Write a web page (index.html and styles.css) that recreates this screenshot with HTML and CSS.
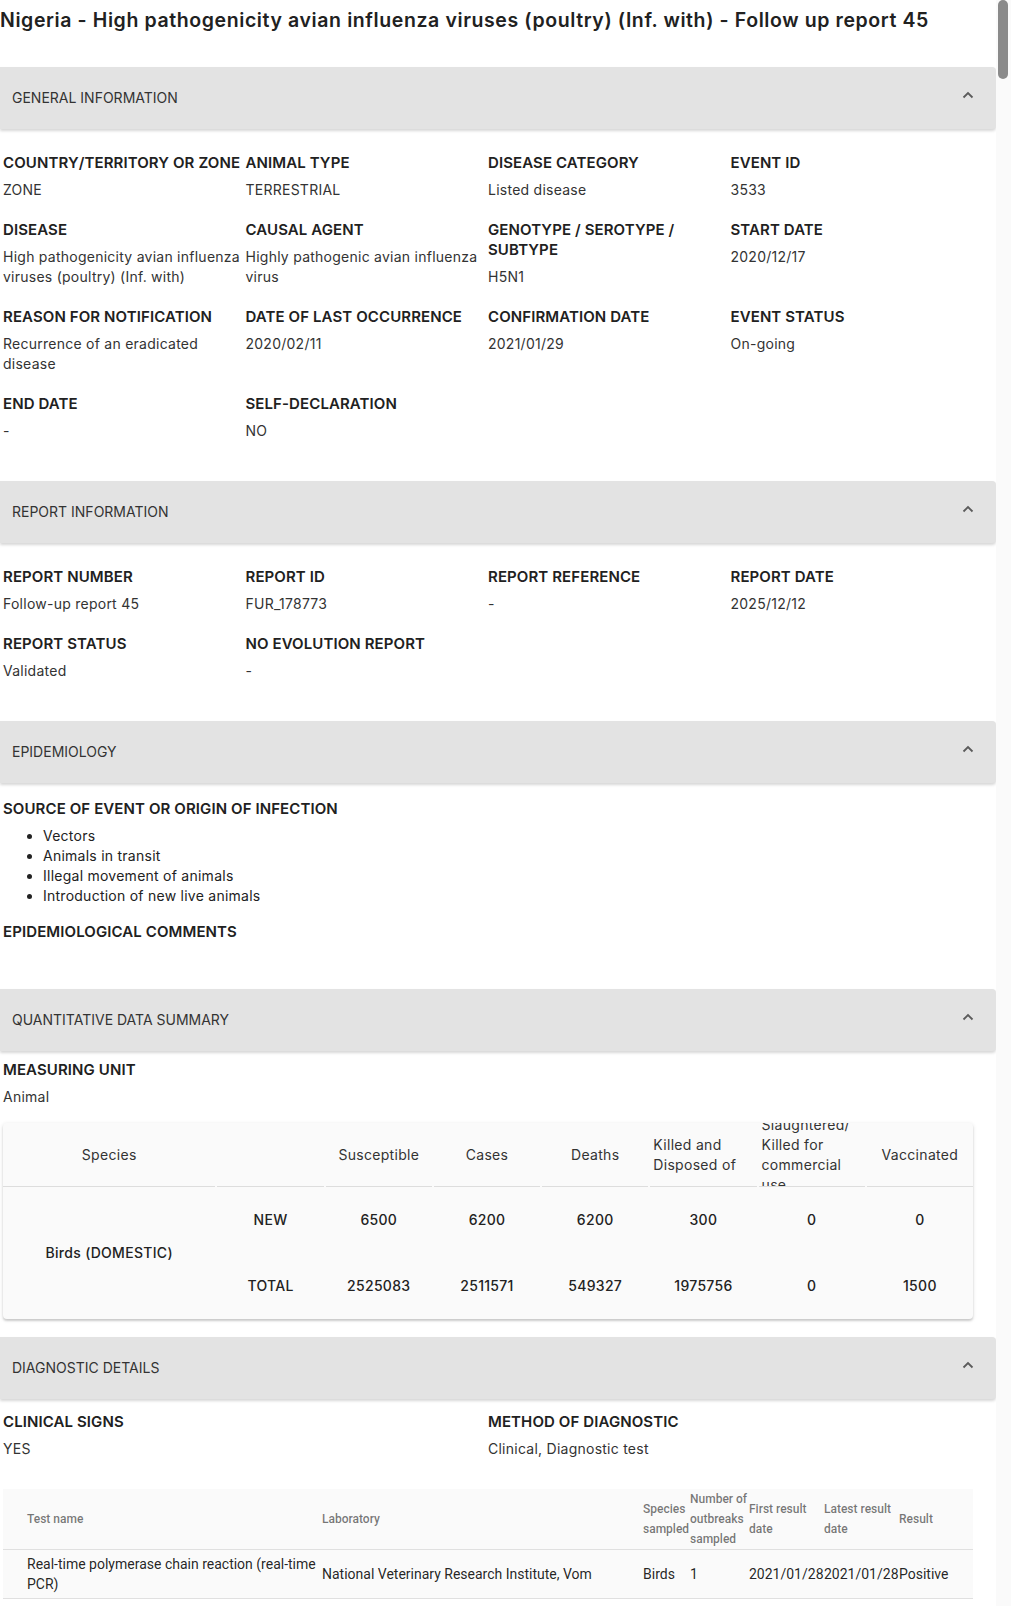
FILE: index.html
```html
<!DOCTYPE html>
<html lang="en">
<head>
  <meta charset="UTF-8">
  <meta name="viewport" content="width=device-width, initial-scale=1.0">
  <title>Follow up report 45 | Event 3533</title>
  <link rel="stylesheet" href="styles.css">
</head>
<body>
  <main class="page">
    <h1 class="report-title">Nigeria - High pathogenicity avian influenza viruses (poultry) (Inf. with) - Follow up report 45</h1>

    <!-- General information -->
    <section class="panel">
      <div class="panel-header">
        <span>General information</span>
        <svg class="chevron" width="12" height="8" viewBox="0 0 12 8"><polyline points="1.5,6.5 6,2 10.5,6.5"/></svg>
      </div>
      <div class="panel-body body-wide">
        <div class="fields four">
          <div class="field"><div class="field-label">Country/territory or zone</div><div class="field-value">ZONE</div></div>
          <div class="field"><div class="field-label">Animal type</div><div class="field-value">TERRESTRIAL</div></div>
          <div class="field"><div class="field-label">Disease category</div><div class="field-value">Listed disease</div></div>
          <div class="field"><div class="field-label">Event ID</div><div class="field-value">3533</div></div>

          <div class="field"><div class="field-label">Disease</div><div class="field-value">High pathogenicity avian influenza viruses (poultry) (Inf. with)</div></div>
          <div class="field"><div class="field-label">Causal agent</div><div class="field-value">Highly pathogenic avian influenza virus</div></div>
          <div class="field"><div class="field-label">Genotype / Serotype / Subtype</div><div class="field-value">H5N1</div></div>
          <div class="field"><div class="field-label">Start date</div><div class="field-value">2020/12/17</div></div>

          <div class="field"><div class="field-label">Reason for notification</div><div class="field-value">Recurrence of an eradicated disease</div></div>
          <div class="field"><div class="field-label">Date of last occurrence</div><div class="field-value">2020/02/11</div></div>
          <div class="field"><div class="field-label">Confirmation date</div><div class="field-value">2021/01/29</div></div>
          <div class="field"><div class="field-label">Event status</div><div class="field-value">On-going</div></div>

          <div class="field"><div class="field-label">End date</div><div class="field-value">-</div></div>
          <div class="field"><div class="field-label">Self-declaration</div><div class="field-value">NO</div></div>
        </div>
      </div>
    </section>

    <!-- Report information -->
    <section class="panel">
      <div class="panel-header">
        <span>Report information</span>
        <svg class="chevron" width="12" height="8" viewBox="0 0 12 8"><polyline points="1.5,6.5 6,2 10.5,6.5"/></svg>
      </div>
      <div class="panel-body body-wide">
        <div class="fields four">
          <div class="field"><div class="field-label">Report number</div><div class="field-value">Follow-up report 45</div></div>
          <div class="field"><div class="field-label">Report ID</div><div class="field-value">FUR_178773</div></div>
          <div class="field"><div class="field-label">Report reference</div><div class="field-value">-</div></div>
          <div class="field"><div class="field-label">Report date</div><div class="field-value">2025/12/12</div></div>

          <div class="field"><div class="field-label">Report status</div><div class="field-value">Validated</div></div>
          <div class="field"><div class="field-label">No evolution report</div><div class="field-value">-</div></div>
        </div>
      </div>
    </section>

    <!-- Epidemiology -->
    <section class="panel">
      <div class="panel-header">
        <span>Epidemiology</span>
        <svg class="chevron" width="12" height="8" viewBox="0 0 12 8"><polyline points="1.5,6.5 6,2 10.5,6.5"/></svg>
      </div>
      <div class="panel-body body-mid">
        <div class="field-label">Source of event or origin of infection</div>
        <ul class="source-list">
          <li>Vectors</li>
          <li>Animals in transit</li>
          <li>Illegal movement of animals</li>
          <li>Introduction of new live animals</li>
        </ul>
        <div class="field">
          <div class="field-label">Epidemiological comments</div>
          <div class="field-value"></div>
        </div>
      </div>
    </section>

    <!-- Quantitative data summary -->
    <section class="panel">
      <div class="panel-header">
        <span>Quantitative data summary</span>
        <svg class="chevron" width="12" height="8" viewBox="0 0 12 8"><polyline points="1.5,6.5 6,2 10.5,6.5"/></svg>
      </div>
      <div class="panel-body body-tight">
        <div class="field unit">
          <div class="field-label">Measuring unit</div>
          <div class="field-value">Animal</div>
        </div>

        <div class="qty-card">
          <div class="qty-grid">
            <div class="qty-th"><span>Species</span></div>
            <div class="qty-th"></div>
            <div class="qty-th"><span>Susceptible</span></div>
            <div class="qty-th"><span>Cases</span></div>
            <div class="qty-th"><span>Deaths</span></div>
            <div class="qty-th"><span>Killed and Disposed of</span></div>
            <div class="qty-th"><span>Slaughtered/ Killed for commercial use</span></div>
            <div class="qty-th"><span>Vaccinated</span></div>

            <div class="qty-td species">Birds (DOMESTIC)</div>
            <div class="qty-td">NEW</div>
            <div class="qty-td">6500</div>
            <div class="qty-td">6200</div>
            <div class="qty-td">6200</div>
            <div class="qty-td">300</div>
            <div class="qty-td">0</div>
            <div class="qty-td">0</div>

            <div class="qty-td">TOTAL</div>
            <div class="qty-td">2525083</div>
            <div class="qty-td">2511571</div>
            <div class="qty-td">549327</div>
            <div class="qty-td">1975756</div>
            <div class="qty-td">0</div>
            <div class="qty-td">1500</div>
          </div>
        </div>
      </div>
    </section>

    <!-- Diagnostic details -->
    <section class="panel">
      <div class="panel-header">
        <span>Diagnostic details</span>
        <svg class="chevron" width="12" height="8" viewBox="0 0 12 8"><polyline points="1.5,6.5 6,2 10.5,6.5"/></svg>
      </div>
      <div class="panel-body body-diag">
        <div class="fields two">
          <div class="field"><div class="field-label">Clinical signs</div><div class="field-value">YES</div></div>
          <div class="field"><div class="field-label">Method of diagnostic</div><div class="field-value">Clinical, Diagnostic test</div></div>
        </div>

        <div class="diag-table">
          <div class="diag-row diag-head">
            <div class="diag-cell first">Test name</div>
            <div class="diag-cell">Laboratory</div>
            <div class="diag-cell">Species sampled</div>
            <div class="diag-cell">Number of outbreaks sampled</div>
            <div class="diag-cell">First result date</div>
            <div class="diag-cell">Latest result date</div>
            <div class="diag-cell last">Result</div>
          </div>
          <div class="diag-row">
            <div class="diag-cell first">Real-time polymerase chain reaction (real-time PCR)</div>
            <div class="diag-cell">National Veterinary Research Institute, Vom</div>
            <div class="diag-cell">Birds</div>
            <div class="diag-cell">1</div>
            <div class="diag-cell nowrap">2021/01/28</div>
            <div class="diag-cell nowrap">2021/01/28</div>
            <div class="diag-cell last">Positive</div>
          </div>
        </div>
      </div>
    </section>
  </main>

  <!-- page scroll rail -->
  <aside class="scroll-rail"><div class="scroll-thumb"></div></aside>
</body>
</html>
```

FILE: styles.css
```css
body {
  margin: 0;
  display: flex;
  font-family: Inter, "Noto Sans", sans-serif;
  font-size: 14px;
  line-height: 20px;
  color: #333;
  background: #fff;
}

.page {
  flex: 1;
  min-width: 0;
}

.scroll-rail {
  flex: none;
  width: 15px;
  background: #fafafa;
}

.scroll-thumb {
  width: 10px;
  height: 79px;
  margin-left: 2px;
  background: #8a8a8a;
  border-radius: 5px;
}

.report-title {
  margin: 6px 0 33px;
  font-size: 19.5px;
  line-height: 28px;
  font-weight: 600;
  letter-spacing: 0.6px;
  color: #212121;
}

/* collapsible panels */
.panel-header {
  height: 62px;
  display: flex;
  align-items: center;
  justify-content: space-between;
  padding: 0 22px 0 12px;
  background: #e3e3e3;
  border-radius: 0 4px 4px 0;
  box-shadow: 0 2px 3px rgba(0, 0, 0, 0.16);
  text-transform: uppercase;
  color: #333;
}

.chevron {
  margin-top: -6px;
}

.chevron polyline {
  fill: none;
  stroke: #5b5b5b;
  stroke-width: 1.8;
}

.panel-body {
  padding: 16px 23px 20px 3px;
}

.body-wide {
  padding-top: 24px;
}

.body-tight {
  padding-top: 9px;
  padding-bottom: 18px;
}

.body-diag {
  padding-top: 13px;
}

/* label / value pairs */
.fields {
  display: grid;
}

.fields.four {
  grid-template-columns: repeat(4, 1fr);
}

.fields.two {
  grid-template-columns: repeat(2, 1fr);
}

.field {
  display: flow-root;
  margin-bottom: 20px;
}

.field-label {
  font-weight: 600;
  font-size: 15px;
  letter-spacing: 0.1px;
  color: #212121;
  text-transform: uppercase;
  margin-bottom: 7px;
}

.field-value {
  letter-spacing: 0.25px;
}

.source-list {
  margin: 7px 0 16px;
  padding-left: 40px;
  letter-spacing: 0.25px;
  color: #222;
}

.unit {
  margin-bottom: 16px;
}

/* quantitative summary */
.qty-card {
  background: #fafafa;
  border-radius: 4px;
  box-shadow: 0 2px 2px rgba(0, 0, 0, 0.14), 0 1px 4px rgba(0, 0, 0, 0.12);
  overflow: hidden;
  letter-spacing: 0.3px;
}

.qty-grid {
  display: grid;
  grid-template-columns: 2fr repeat(7, 1fr);
  grid-template-rows: 64px 66px 66px;
  column-gap: 2px;
}

.qty-th {
  display: flex;
  align-items: center;
  justify-content: center;
  padding: 0 3px;
  overflow: hidden;
  border-bottom: 1px solid #ddd;
}

.qty-th span {
  display: inline-block;
}

.qty-td {
  display: flex;
  align-items: center;
  justify-content: center;
  font-weight: 500;
  color: #222;
}

.qty-td.species {
  grid-row: span 2;
}

/* diagnostic tests */
.diag-table {
  margin-top: 10px;
  background: #fafafa;
  font-family: Roboto, "Liberation Sans", sans-serif;
  color: rgba(0, 0, 0, 0.87);
}

.diag-row {
  display: grid;
  grid-template-columns: 319px 321px 47px 59px 75px 75px 1fr;
  align-items: center;
  min-height: 48px;
  border-bottom: 1px solid #e0e0e0;
}

.diag-head {
  min-height: 60px;
  font-size: 12px;
  font-weight: 500;
  color: rgba(0, 0, 0, 0.54);
}

.diag-cell.first {
  padding-left: 24px;
  padding-right: 6px;
}

.diag-cell.last {
  padding-right: 24px;
}

.diag-cell.nowrap {
  white-space: nowrap;
}
```
